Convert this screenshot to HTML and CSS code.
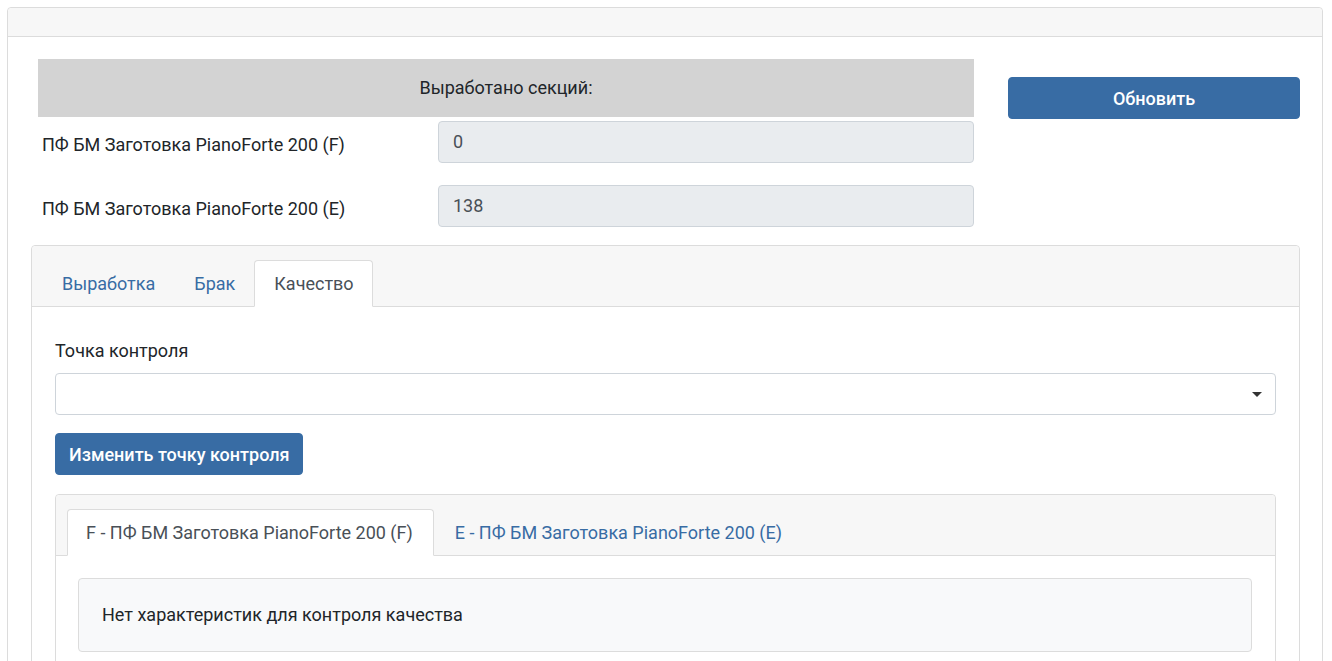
FILE: index.html
```html
<!DOCTYPE html>
<html lang="ru">
<head>
<meta charset="utf-8">
<title>Выработка</title>
<link rel="stylesheet" href="styles.css">
</head>
<body>
<div class="card outer">
  <div class="card-header outer-header"></div>
  <div class="outer-body">
    <div class="top">
      <div class="top-left">
        <div class="summary">Выработано секций:</div>
        <div class="row row-first">
          <div class="row-label">ПФ БМ Заготовка PianoForte 200 (F)</div>
          <div class="input">0</div>
        </div>
        <div class="row">
          <div class="row-label">ПФ БМ Заготовка PianoForte 200 (E)</div>
          <div class="input">138</div>
        </div>
      </div>
      <div class="top-right">
        <button class="btn btn-wide">Обновить</button>
      </div>
    </div>

    <div class="card tabs-card">
      <div class="card-header tabs-header">
        <ul class="tabs">
          <li class="tab">Выработка</li>
          <li class="tab">Брак</li>
          <li class="tab active">Качество</li>
        </ul>
      </div>
      <div class="tabs-body">
        <div class="field-label">Точка контроля</div>
        <div class="select"><span class="caret"></span></div>
        <button class="btn btn-change">Изменить точку контроля</button>

        <div class="card inner-card">
          <div class="card-header inner-header">
            <ul class="tabs inner-tabs">
              <li class="tab active">F - ПФ БМ Заготовка PianoForte 200 (F)</li>
              <li class="tab">E - ПФ БМ Заготовка PianoForte 200 (E)</li>
            </ul>
          </div>
          <div class="inner-body">
            <div class="alert">Нет характеристик для контроля качества</div>
          </div>
        </div>
      </div>
    </div>
  </div>
</div>
</body>
</html>
```

FILE: styles.css
```css
* { box-sizing: border-box; }
html, body { height: 100%; }
body {
  margin: 0;
  padding: 7px 9px 0 7px;
  font-family: Roboto, "Noto Sans", "Liberation Sans", sans-serif;
  font-size: 18px;
  line-height: 22px;
  color: #212529;
  background: #fff;
  overflow: hidden;
}
.card {
  border: 1px solid #dcdcdc;
  border-radius: 4px;
  background: #fff;
}
.card-header {
  background: #f7f7f7;
  border-bottom: 1px solid #dcdcdc;
  border-radius: 4px 4px 0 0;
}
.outer { height: 660px; overflow: hidden; }
.outer-header { height: 29px; }
.outer-body { padding: 22px 22px 0 23px; }

.top {
  display: flex;
  padding-left: 7px;
  align-items: flex-start;
}
.top-left { width: 936px; }
.top-right { flex: 1; padding-left: 34px; padding-top: 18px; }
.summary {
  height: 58px;
  background: #d3d3d3;
  display: flex;
  align-items: center;
  justify-content: center;
}
.row {
  display: flex;
  align-items: center;
  margin-top: 22px;
}
.row-first { margin-top: 4px; }
.row-label {
  width: 400px;
  padding-left: 4px;
  padding-top: 6px;
}
.input {
  flex: 1;
  height: 42px;
  background: #e9ecef;
  border: 1px solid #ced4da;
  border-radius: 4px;
  padding: 0 14px;
  display: flex;
  align-items: center;
  color: #495057;
}
.btn {
  background: #386ca4;
  color: #fff;
  border: 1px solid #386ca4;
  border-radius: 4px;
  font-family: inherit;
  font-size: 18px;
  font-weight: 500;
  height: 42px;
  cursor: pointer;
}
.btn-wide { width: 100%; }

.tabs-card { margin-top: 18px; height: 500px; }
.tabs-header { padding: 14px 0 0 10px; }
.tabs {
  display: flex;
  list-style: none;
  margin: 0;
  padding: 0;
  margin-bottom: -1px;
}
.tab {
  padding: 0 18px 0 19px;
  height: 47px;
  display: flex;
  align-items: center;
  color: #386ca4;
  border: 1px solid transparent;
  border-radius: 4px 4px 0 0;
}
.tab.active {
  background: #fff;
  color: #495057;
  border-color: #dcdcdc;
  border-bottom-color: #fff;
}
.tabs-body { padding: 33px 23px 0 23px; }
.field-label { line-height: 22px; }
.select {
  margin-top: 11px;
  height: 42px;
  border: 1px solid #ced4da;
  border-radius: 4px;
  position: relative;
}
.caret {
  position: absolute;
  right: 13px;
  top: 18px;
  width: 0;
  height: 0;
  border-left: 5px solid transparent;
  border-right: 5px solid transparent;
  border-top: 5px solid #333;
}
.btn-change {
  display: block;
  margin-top: 18px;
  padding: 0 13px;
}
.inner-card { margin-top: 19px; height: 300px; }
.inner-header { padding: 14px 0 0 11px; }
.inner-tabs .tab { padding: 0 20px 0 18px; }
.inner-tabs .tab + .tab { padding-left: 20px; }
.inner-body { padding: 22px 23px 0 22px; }
.alert {
  background: #f8f9fa;
  border: 1px solid #dcdcdc;
  border-radius: 4px;
  height: 74px;
  padding: 0 23px;
  display: flex;
  align-items: center;
}
```
